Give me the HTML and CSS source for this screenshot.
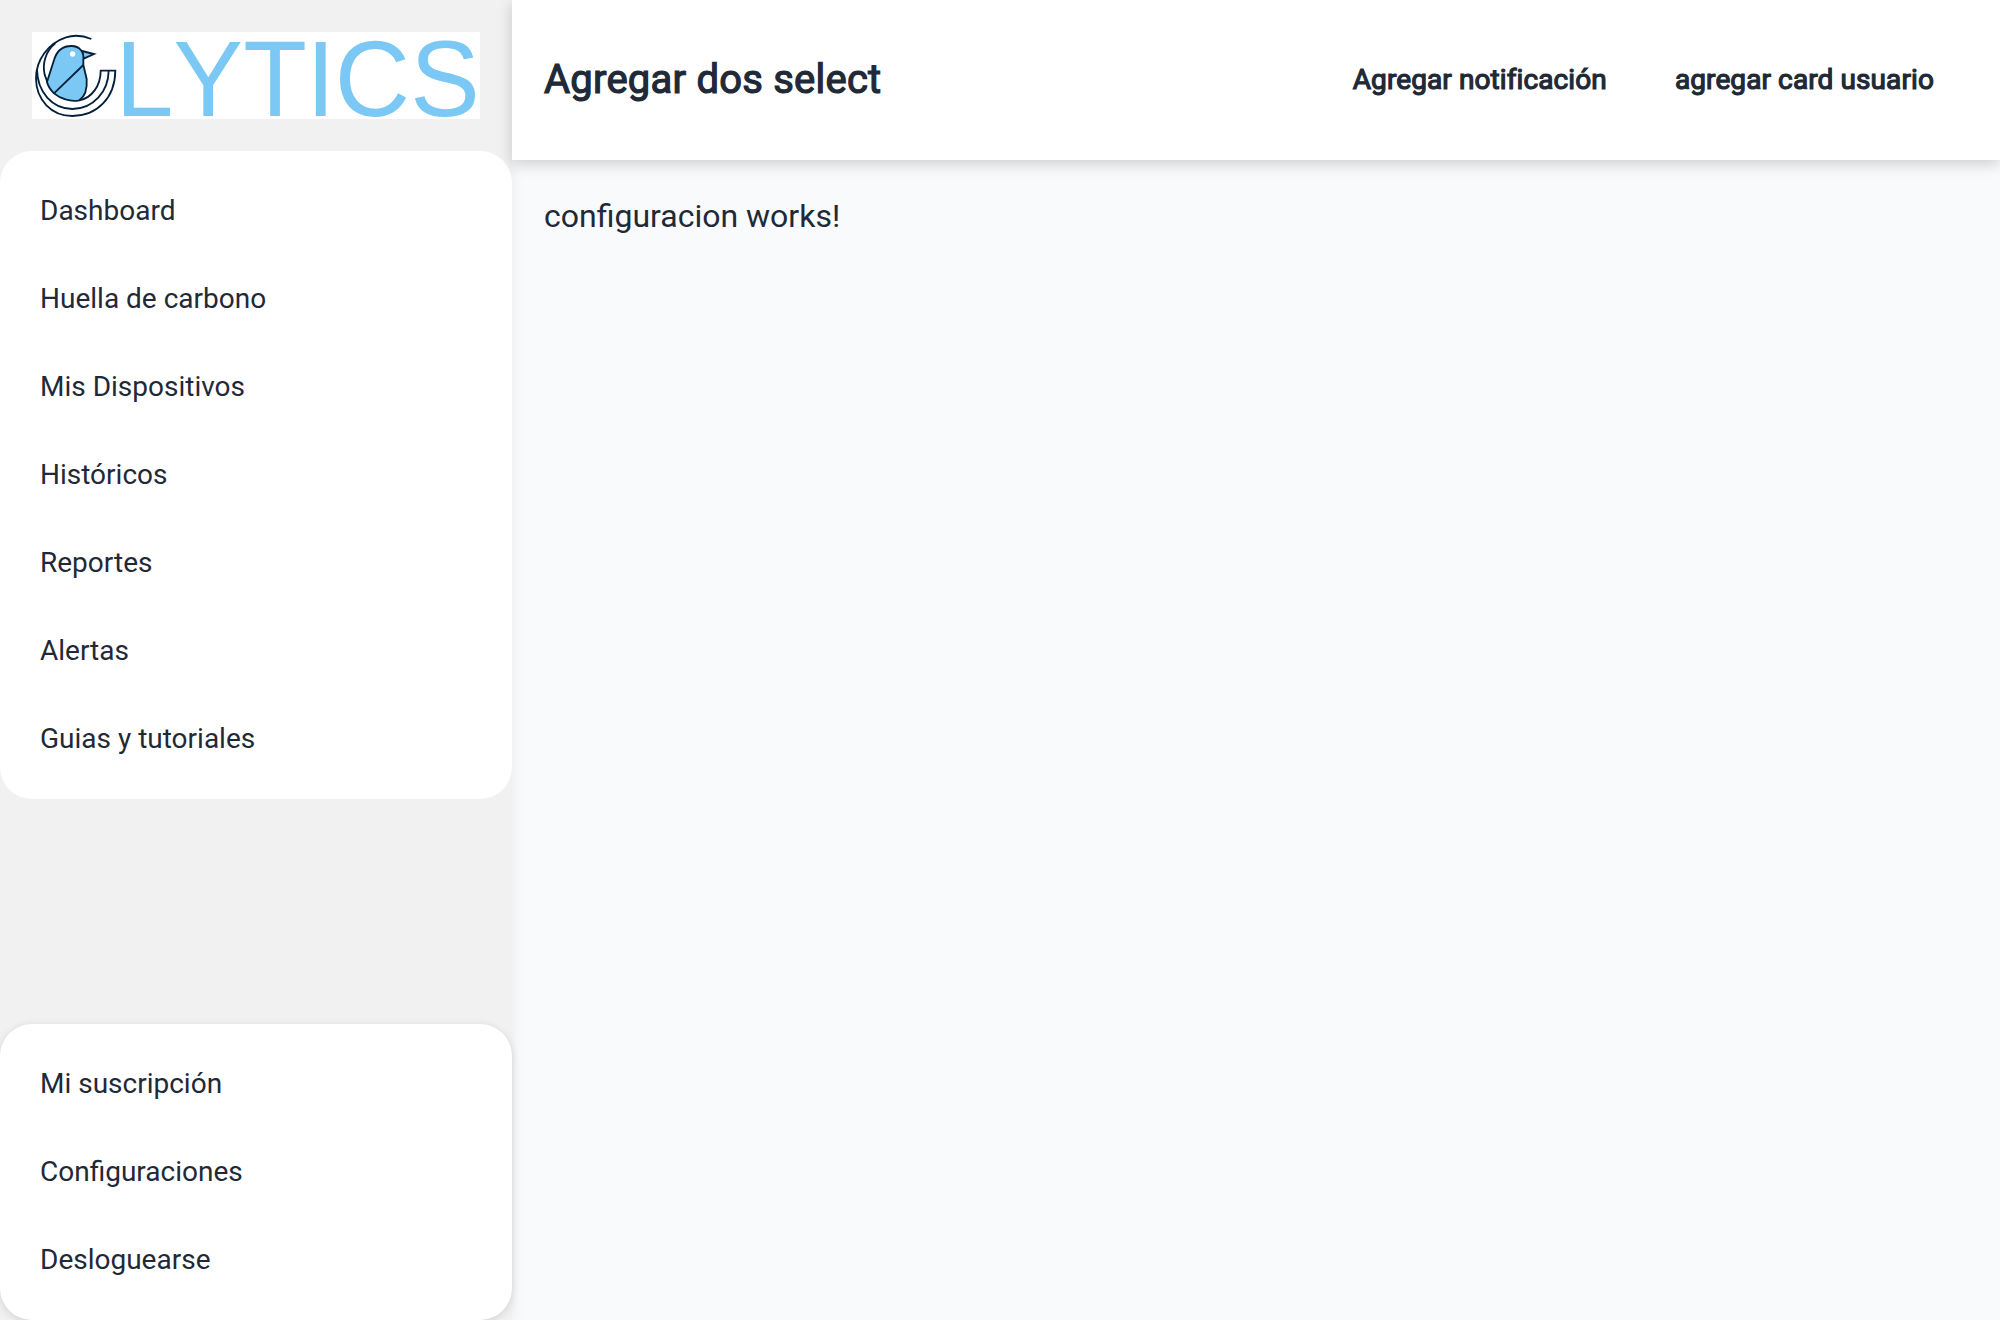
FILE: index.html
```html
<!DOCTYPE html>
<html lang="es">
<head>
<meta charset="utf-8">
<title>Configuración</title>
<link rel="stylesheet" href="styles.css">
</head>
<body>
<div class="app">
  <aside class="sidebar">
    <div class="brand">
      <svg class="logo" viewBox="36 36 1344 261" role="img" aria-label="Clytics">
        <g class="logo-mark">
          <path d="M214 57C190 47 164 44 138 52C84 70 48 120 48 175C48 240 95 288 157 288C230 288 285 235 286 152H242C242 198 215 234 178 241"/>
          <path d="M106 70C78 92 66 130 74 164L82 186"/>
          <path d="M51 148C52 218 98 267 157 267C220 267 265 215 266 152"/>
          <path class="logo-fill" d="M186 93L222 102L191 116Z"/>
          <path class="logo-fill" d="M81 186L103 117C112 90 130 78 154 78C179 78 193 96 190 121V135L200 177C202 205 194 230 178 241C150 247 120 235 102 220C92 210 84 199 81 186Z"/>
          <path d="M190 135L102 220"/>
          <circle class="logo-eye" cx="158" cy="102" r="8"/>
        </g>
        <text class="logo-text" transform="scale(.962 1)" x="297.6 479 696 893 981.5 1217" y="288.5">LYTICS</text>
      </svg>
    </div>
    <nav class="menu">
      <a class="menu-item">Dashboard</a>
      <a class="menu-item">Huella de carbono</a>
      <a class="menu-item">Mis Dispositivos</a>
      <a class="menu-item">Históricos</a>
      <a class="menu-item">Reportes</a>
      <a class="menu-item">Alertas</a>
      <a class="menu-item">Guias y tutoriales</a>
    </nav>
    <nav class="menu menu-bottom">
      <a class="menu-item">Mi suscripción</a>
      <a class="menu-item">Configuraciones</a>
      <a class="menu-item">Desloguearse</a>
    </nav>
  </aside>
  <div class="main">
    <header class="topbar">
      <h1 class="title">Agregar dos select</h1>
      <div class="actions">
        <span>Agregar notificación</span>
        <span>agregar card usuario</span>
      </div>
    </header>
    <main class="content"><p>configuracion works!</p></main>
  </div>
</div>
</body>
</html>
```
FILE: styles.css
```css
* { box-sizing: border-box; }
body {
  margin: 0;
  font-family: Roboto, sans-serif;
  color: #1f2937;
  background: #f8fafc;
}
.app { display: flex; height: 1320px; overflow: hidden; }
.sidebar {
  display: flex;
  flex-direction: column;
  width: 512px;
  flex: none;
  background: #f1f1f1;
  box-shadow: 0 2px 12px rgba(0, 0, 0, .07);
}
.brand { padding: 32px; }
.logo { display: block; width: 448px; height: 87px; background: #fff; overflow: visible; }
.logo-mark {
  fill: none;
  stroke: #04203a;
  stroke-width: 5.5;
}
.logo-fill { fill: #7bc8f4; }
.logo-eye { fill: #fff; stroke: none; }
.logo-text {
  font-family: "Liberation Sans", Arial, sans-serif;
  font-size: 325px;
  fill: #7bc8f4;
}
.menu {
  padding: 16px 0;
  background: #fff;
  border-radius: 32px;
}
.menu-bottom {
  margin-top: auto;
  box-shadow: 0 2px 8px rgba(0, 0, 0, .13);
}
.menu-item {
  display: flex;
  align-items: center;
  height: 88px;
  padding: 0 40px 2px;
  font-size: 28px;
}
.main { flex: 1; }
.topbar {
  display: flex;
  align-items: center;
  justify-content: space-between;
  height: 160px;
  padding: 0 66px 2px 32px;
  background: #fff;
  box-shadow: 0 4px 14px rgba(0, 0, 0, .18);
}
.title, .actions { -webkit-text-stroke: 1.2px currentColor; }
.title { margin: 0; font-size: 40px; font-weight: 400; letter-spacing: .22px; }
.actions { display: flex; gap: 68px; font-size: 28px; letter-spacing: .1px; }
.content { padding: 32px; font-size: 32px; line-height: 48px; }
.content p { margin: 0; }
```
